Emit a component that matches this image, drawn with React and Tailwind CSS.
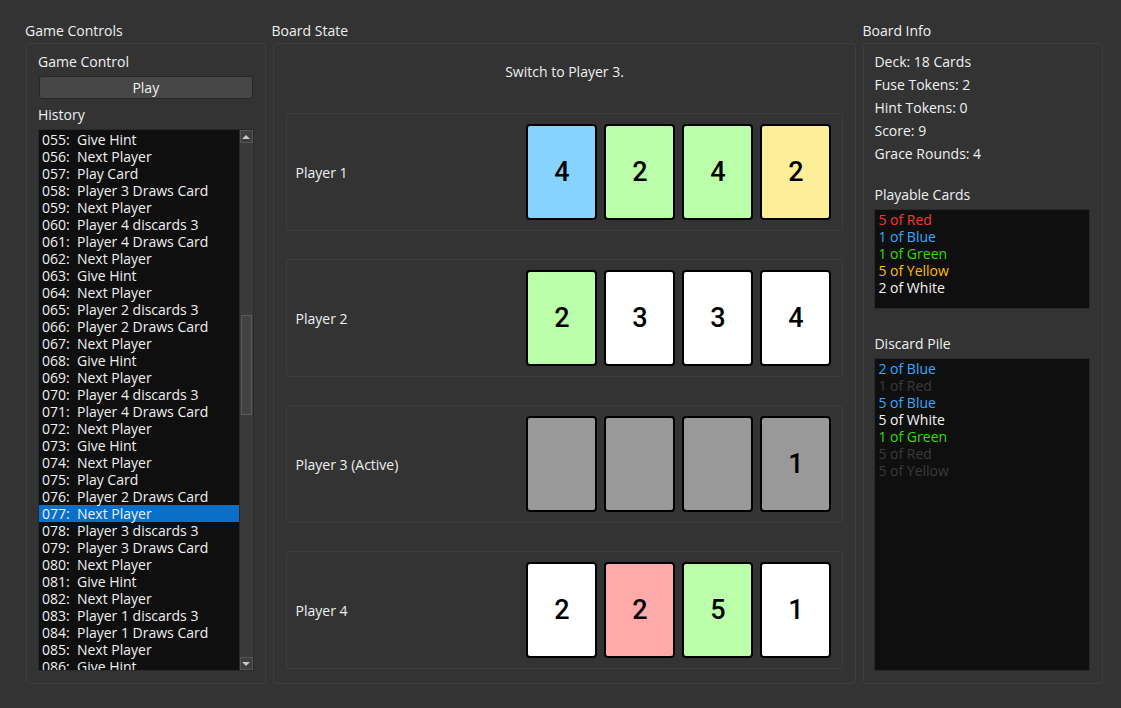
import React from 'react';

const history = [
  '055:  Give Hint', '056:  Next Player', '057:  Play Card', '058:  Player 3 Draws Card',
  '059:  Next Player', '060:  Player 4 discards 3', '061:  Player 4 Draws Card', '062:  Next Player',
  '063:  Give Hint', '064:  Next Player', '065:  Player 2 discards 3', '066:  Player 2 Draws Card',
  '067:  Next Player', '068:  Give Hint', '069:  Next Player', '070:  Player 4 discards 3',
  '071:  Player 4 Draws Card', '072:  Next Player', '073:  Give Hint', '074:  Next Player',
  '075:  Play Card', '076:  Player 2 Draws Card', '077:  Next Player', '078:  Player 3 discards 3',
  '079:  Player 3 Draws Card', '080:  Next Player', '081:  Give Hint', '082:  Next Player',
  '083:  Player 1 discards 3', '084:  Player 1 Draws Card', '085:  Next Player', '086:  Give Hint',
];

const players = [
  { name: 'Player 1', cards: [['4', 'bg-[#87d3ff]'], ['2', 'bg-[#bbffaa]'], ['4', 'bg-[#bbffaa]'], ['2', 'bg-[#ffee99]']] },
  { name: 'Player 2', cards: [['2', 'bg-[#bbffaa]'], ['3', 'bg-white'], ['3', 'bg-white'], ['4', 'bg-white']] },
  { name: 'Player 3 (Active)', cards: [['', 'bg-[#999999]'], ['', 'bg-[#999999]'], ['', 'bg-[#999999]'], ['1', 'bg-[#999999]']] },
  { name: 'Player 4', cards: [['2', 'bg-white'], ['2', 'bg-[#ffaaaa]'], ['5', 'bg-[#bbffaa]'], ['1', 'bg-white']] },
];

const playable = [
  ['5 of Red', 'text-[#ff3333]'],
  ['1 of Blue', 'text-[#33aaff]'],
  ['1 of Green', 'text-[#33dd00]'],
  ['5 of Yellow', 'text-[#ffbb00]'],
  ['2 of White', 'text-[#f5f5f5]'],
];

const discards = [
  ['2 of Blue', 'text-[#33aaff]'],
  ['1 of Red', 'text-[#3a3a3a]'],
  ['5 of Blue', 'text-[#33aaff]'],
  ['5 of White', 'text-[#f5f5f5]'],
  ['1 of Green', 'text-[#33dd00]'],
  ['5 of Red', 'text-[#3a3a3a]'],
  ['5 of Yellow', 'text-[#3a3a3a]'],
];

const Group = ({ title, className, children }) => (
  <div className={`flex flex-col ${className}`}>
    <div className="h-[20px] leading-[20px] -ml-[1px]">{title}</div>
    <div className="flex-1 border border-[#3d3d3d] rounded-[3px] mt-[2px] min-h-0">{children}</div>
  </div>
);

const Card = ({ value, color }) => (
  <div className={`w-[71px] h-[96px] border-2 border-black rounded-[4px] flex items-center justify-center text-[27px] font-medium text-black ${color}`} style={{ fontFamily: 'Roboto, "Liberation Sans", Arial, sans-serif' }}>
    {value}
  </div>
);

export default function App() {
  return (
    <div className="w-[1121px] h-[708px] bg-[#333333] text-[#eff0f1] text-[14px] flex gap-[7px] pl-[26px] pr-[18px] pt-[21px] pb-[24px]" style={{ fontFamily: '"Open Sans", "DejaVu Sans", sans-serif' }}>
      <Group title="Game Controls" className="w-[240px]">
        <div className="flex flex-col h-full px-[11px] pt-[8px] pb-[12px]">
          <div className="leading-[20px]">Game Control</div>
          <button className="mt-[4px] mx-[1px] h-[23px] border border-[#262626] rounded-[3px] bg-[#474747] text-[#eff0f1] leading-[20px]">Play</button>
          <div className="mt-[6px] leading-[20px]">History</div>
          <div className="mt-[4px] flex-1 min-h-0 bg-[#0f0f0f] border border-[#2a2a2a] flex overflow-hidden">
            <div className="flex-1 overflow-hidden pt-[1px]">
              {history.map((h) => (
                <div key={h} className={`h-[17px] leading-[17px] pl-[3px] whitespace-pre ${h.startsWith('077') ? 'bg-[#0a6fc8]' : ''}`}>{h}</div>
              ))}
            </div>
            <div className="w-[14px] bg-[#3a3a3a] border-l border-[#2a2a2a] flex flex-col">
              <div className="h-[13px] border border-[#555] bg-[#3d3d3d] flex items-center justify-center">
                <div className="w-0 h-0 border-l-[4px] border-r-[4px] border-b-[4px] border-l-transparent border-r-transparent border-b-[#c8c8c8]" />
              </div>
              <div className="h-[172px]" />
              <div className="h-[100px] mx-[1px] border border-[#5a5a5a] bg-[#424242]" />
              <div className="flex-1" />
              <div className="h-[13px] border border-[#555] bg-[#3d3d3d] flex items-center justify-center">
                <div className="w-0 h-0 border-l-[4px] border-r-[4px] border-t-[4px] border-l-transparent border-r-transparent border-t-[#c8c8c8]" />
              </div>
            </div>
          </div>
        </div>
      </Group>

      <Group title="Board State" className="w-[585px]">
        <div className="flex flex-col px-[12px]">
          <div className="h-[69px] flex items-center justify-center pb-[15px]">Switch to Player 3.</div>
          <div className="flex flex-col gap-[28px]">
            {players.map((p) => (
              <div key={p.name} className="h-[118px] border border-[#3d3d3d] rounded-[3px] flex items-center justify-between pl-[9px] pr-[11px]">
                <span>{p.name}</span>
                <div className="flex gap-[7px]">
                  {p.cards.map(([v, c], i) => (
                    <Card key={i} value={v} color={c} />
                  ))}
                </div>
              </div>
            ))}
          </div>
        </div>
      </Group>

      <Group title="Board Info" className="w-[240px]">
        <div className="flex flex-col h-full px-[10px] pt-[6px] pb-[12px]">
          {['Deck: 18 Cards', 'Fuse Tokens: 2', 'Hint Tokens: 0', 'Score: 9', 'Grace Rounds: 4'].map((t) => (
            <div key={t} className="h-[23px] leading-[23px]">{t}</div>
          ))}
          <div className="mt-[20px] leading-[20px]">Playable Cards</div>
          <div className="mt-[4px] h-[100px] bg-[#0f0f0f] border border-[#2a2a2a] mr-[2px] pl-[3px] pt-[1px]">
            {playable.map(([t, c]) => (
              <div key={t} className={`h-[17px] leading-[17px] ${c}`}>{t}</div>
            ))}
          </div>
          <div className="mt-[25px] leading-[20px]">Discard Pile</div>
          <div className="mt-[4px] flex-1 bg-[#0f0f0f] border border-[#2a2a2a] mr-[2px] pl-[3px] pt-[1px]">
            {discards.map(([t, c], i) => (
              <div key={i} className={`h-[17px] leading-[17px] ${c}`}>{t}</div>
            ))}
          </div>
        </div>
      </Group>
    </div>
  );
}
